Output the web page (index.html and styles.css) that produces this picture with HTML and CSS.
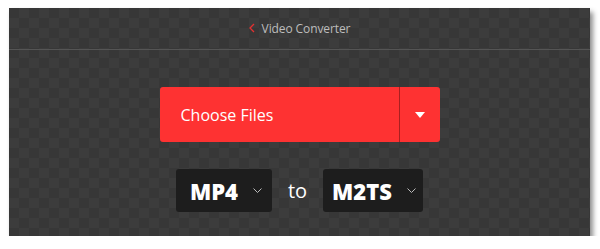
FILE: index.html
```html
<!DOCTYPE html>
<html lang="en">
<head>
  <meta charset="UTF-8">
  <title>Video Converter</title>
  <link rel="stylesheet" href="styles.css">
</head>
<body>

<div class="panel">
  <div class="panel-header">
    <svg class="back" width="6" height="10" viewBox="0 0 6 10"><path d="M5 1L1 5l4 4" fill="none" stroke="#e53030" stroke-width="1.3"/></svg>
    <span class="title">Video Converter</span>
  </div>

  <div class="panel-body">
    <div class="choose">
      <div class="choose-main">Choose Files</div>
      <div class="choose-drop">
        <svg width="10" height="6" viewBox="0 0 10 6"><path d="M0 0h10L5 6z" fill="#fff"/></svg>
      </div>
    </div>

    <div class="formats">
      <div class="format format-from">
        <span>MP4</span>
        <svg width="9" height="5" viewBox="0 0 9 5"><path d="M0.5 0.5l4 4 4-4" fill="none" stroke="#bbb" stroke-width="1"/></svg>
      </div>
      <div class="to">to</div>
      <div class="format format-to">
        <span>M2TS</span>
        <svg width="9" height="5" viewBox="0 0 9 5"><path d="M0.5 0.5l4 4 4-4" fill="none" stroke="#bbb" stroke-width="1"/></svg>
      </div>
    </div>
  </div>
</div>

</body>
</html>
```

FILE: styles.css
```css
body {
  margin: 0;
  padding: 0;
  background: #fff;
  font-family: "Open Sans", "Noto Sans", sans-serif;
}

/* Dark panel with checker pattern */
.panel {
  margin: 8px 0 0 9px;
  width: 581px;
  height: 228px;
  background-color: #373737;
  background-image: conic-gradient(#3c3c3c 25%, #373737 0 50%, #3c3c3c 0 75%, #373737 0);
  background-size: 20px 20px;
  box-shadow: 3px 4px 5px rgba(0, 0, 0, 0.45);
}

.panel-header {
  height: 41px;
  border-bottom: 1px solid #555;
  display: flex;
  justify-content: center;
  align-items: center;
  gap: 7px;
  color: #bdbdbd;
  font-size: 12px;
  letter-spacing: -0.1px;
}

.back {
  margin-top: -1px;
}

.panel-body {
  display: flex;
  flex-direction: column;
  align-items: center;
  padding-top: 37px;
}

/* Red choose button */
.choose {
  display: flex;
  width: 280px;
  height: 55px;
  background: #fe3232;
  border-radius: 3px;
  color: #fff;
}

.choose-main {
  flex: 1;
  display: flex;
  align-items: center;
  padding-left: 21px;
  font-size: 16px;
  border-right: 1px solid #a82020;
}

.choose-drop {
  width: 40px;
  display: flex;
  align-items: center;
  justify-content: center;
}

/* Format selects */
.formats {
  display: flex;
  align-items: center;
  gap: 16px;
  margin-top: 27px;
}

.format {
  display: flex;
  align-items: center;
  justify-content: space-between;
  height: 43px;
  padding: 0 10px 0 14px;
  background: #1d1d1d;
  border-radius: 3px;
  color: #fff;
  font-size: 22px;
  font-weight: 800;
  box-sizing: border-box;
}

.format-from {
  width: 96px;
}

.format-to {
  width: 100px;
  padding-left: 9px;
  padding-right: 7px;
}

.to {
  color: #fff;
  font-size: 20px;
}
```
